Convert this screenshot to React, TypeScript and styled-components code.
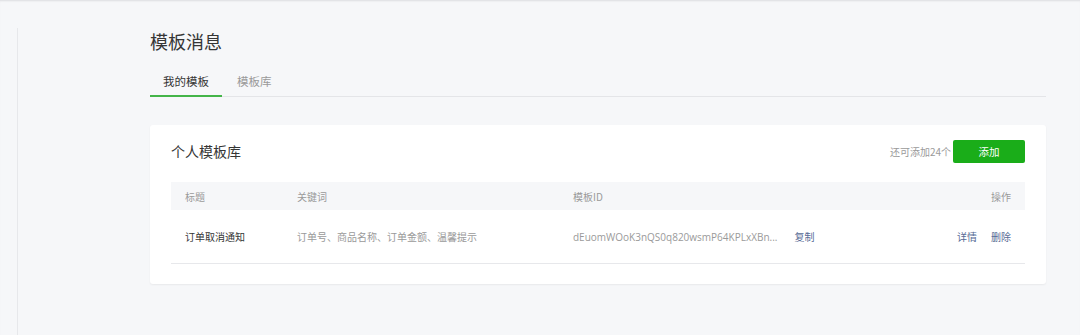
import React from 'react';
import styled, { createGlobalStyle } from 'styled-components';

const GlobalStyle = createGlobalStyle`
  html, body {
    margin: 0;
    padding: 0;
    background: #f6f7f9;
  }
  body {
    font-family: "Noto Sans CJK SC", "Noto Sans", sans-serif;
    color: #353535;
  }
`;

interface Template {
  title: string;
  keywords: string;
  id: string;
}

const templates: Template[] = [
  {
    title: '订单取消通知',
    keywords: '订单号、商品名称、订单金额、温馨提示',
    id: 'dEuomWOoK3nQS0q820wsmP64KPLxXBn...',
  },
];

const App: React.FC = () => {
  return (
    <Page>
      <GlobalStyle />
      <Sidebar />
      <Main>
        <PageTitle>模板消息</PageTitle>
        <Tabs>
          <Tab active>我的模板</Tab>
          <Tab>模板库</Tab>
        </Tabs>
        <Card>
          <CardHeader>
            <CardTitle>个人模板库</CardTitle>
            <HeaderRight>
              <Quota>还可添加24个</Quota>
              <AddButton>添加</AddButton>
            </HeaderRight>
          </CardHeader>
          <Table>
            <HeadRow>
              <Cell>标题</Cell>
              <Cell>关键词</Cell>
              <Cell>模板ID</Cell>
              <Cell align="right">操作</Cell>
            </HeadRow>
            {templates.map((t) => (
              <BodyRow key={t.id}>
                <Cell dark>{t.title}</Cell>
                <Cell>{t.keywords}</Cell>
                <Cell>
                  <IdText>{t.id}</IdText>
                  <Link>复制</Link>
                </Cell>
                <Cell align="right">
                  <Link>详情</Link>
                  <Link>删除</Link>
                </Cell>
              </BodyRow>
            ))}
          </Table>
        </Card>
      </Main>
    </Page>
  );
};

const Page = styled.div`
  display: flex;
  height: 335px;
  box-shadow: inset 0 2px 2px -1px #dcdde0;
  overflow: hidden;
`;

const Sidebar = styled.div`
  width: 17px;
  margin-top: 28px;
  border-right: 1px solid #e7e8eb;
  flex-shrink: 0;
`;

const Main = styled.div`
  flex: 1;
  padding: 28px 34px 0 132px;
`;

const PageTitle = styled.h1`
  margin: 0;
  font-size: 18px;
  font-weight: 400;
  line-height: 26px;
  color: #353535;
`;

const Tabs = styled.div`
  display: flex;
  margin-top: 16px;
  border-bottom: 1px solid #e4e5e8;
`;

const Tab = styled.div<{ active?: boolean }>`
  text-align: center;
  font-size: 11.5px;
  line-height: 16px;
  padding: 3px 13px 6px;
  margin-right: 2px;
  color: ${({ active }) => (active ? '#353535' : '#9a9a9a')};
  border-bottom: 2px solid ${({ active }) => (active ? '#44b549' : 'transparent')};
  margin-bottom: -1px;
`;

const Card = styled.div`
  margin-top: 28px;
  background: #fff;
  border-radius: 3px;
  box-shadow: 0 1px 2px rgba(0, 0, 0, 0.06);
  padding: 14px 21px 20px;
`;

const CardHeader = styled.div`
  display: flex;
  align-items: center;
  justify-content: space-between;
  height: 24px;
  margin-bottom: 19px;
`;

const CardTitle = styled.h2`
  margin: 0;
  font-size: 14px;
  font-weight: 400;
  color: #353535;
`;

const HeaderRight = styled.div`
  display: flex;
  align-items: center;
`;

const Quota = styled.span`
  font-size: 10px;
  color: #9a9a9a;
  margin-right: 2px;
`;

const AddButton = styled.button`
  width: 72px;
  height: 23px;
  border: none;
  border-radius: 2px;
  background: #1aad19;
  color: #fff;
  font-family: inherit;
  font-size: 10.5px;
  padding: 0;
`;

const Table = styled.div`
  display: flex;
  flex-direction: column;
`;

const HeadRow = styled.div`
  display: grid;
  grid-template-columns: 112px 276px 1fr 120px;
  align-items: center;
  height: 28px;
  padding: 0 14px;
  background: #f6f7f9;
  color: #9a9a9a;
`;

const BodyRow = styled(HeadRow)`
  height: 53px;
  background: #fff;
  border-bottom: 1px solid #e7e8eb;
`;

const Cell = styled.div<{ align?: 'left' | 'right'; dark?: boolean }>`
  display: flex;
  align-items: center;
  justify-content: ${({ align }) => (align === 'right' ? 'flex-end' : 'flex-start')};
  gap: 14px;
  font-size: 10px;
  color: ${({ dark }) => (dark ? '#353535' : '#9a9a9a')};
  white-space: nowrap;
`;

const IdText = styled.span`
  font-family: "Open Sans", "Noto Sans CJK SC", sans-serif;
  font-size: 10px;
  margin-right: 3px;
`;

const Link = styled.a`
  color: #576b95;
  cursor: pointer;
`;

export default App;
